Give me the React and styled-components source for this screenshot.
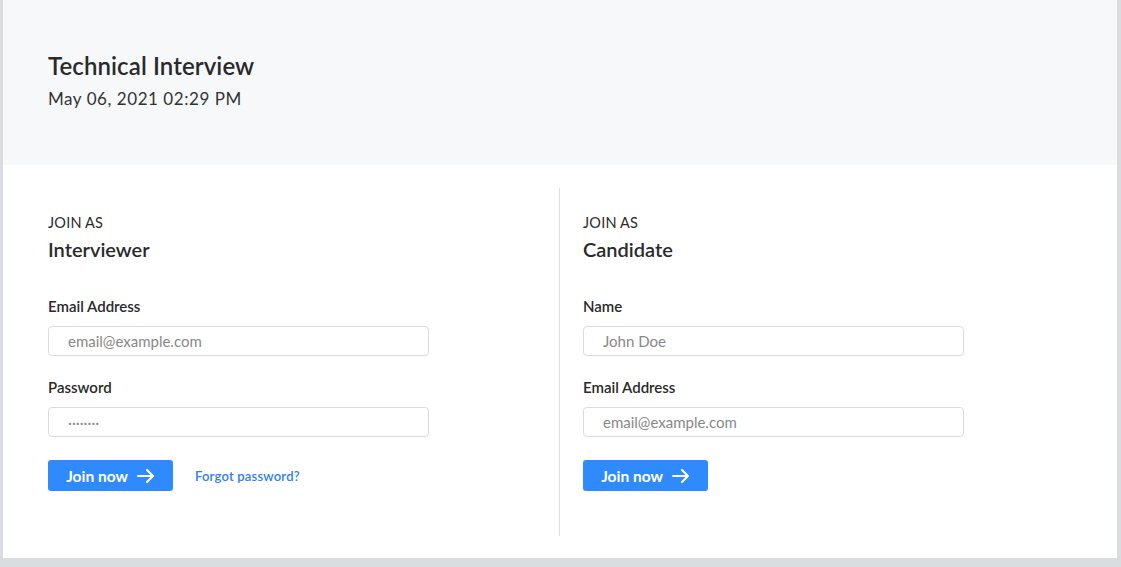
import React from 'react'
import styled, { createGlobalStyle } from 'styled-components'

const GlobalStyle = createGlobalStyle`
  html, body {
    margin: 0;
    padding: 0;
    background: #dadde0;
    font-family: Lato, 'Open Sans', sans-serif;
    color: #2b2b2b;
  }
  * { box-sizing: border-box; }
`

const Page = styled.div`
  padding: 0 4px 9px 3px;
`

const Card = styled.div`
  background: #fff;
  height: 558px;
  display: flex;
  flex-direction: column;
`

const Header = styled.header`
  background: #f7f8fa;
  height: 165px;
  padding: 51px 45px 0;
`

const Title = styled.h1`
  margin: 0;
  font-size: 24px;
  font-weight: 600;
  line-height: 30px;
  color: #2a2a2a;
  letter-spacing: 0.1px;
`

const DateText = styled.div`
  margin-top: 7px;
  font-size: 17px;
  line-height: 22px;
  color: #333;
  letter-spacing: 0.55px;
`

const Body = styled.div`
  display: flex;
  padding: 23px 0 22px 45px;
  flex: 1;
`

const Column = styled.section`
  width: ${p => (p.$first ? '512px' : 'auto')};
  padding: 25px 0 0 ${p => (p.$first ? '0' : '23px')};
  border-right: ${p => (p.$first ? '1px solid #dcdfe6' : 'none')};
`

const Overline = styled.div`
  font-size: 14.5px;
  line-height: 20px;
  color: #2b2b2b;
  text-transform: uppercase;
  letter-spacing: 0.2px;
`

const RoleName = styled.h2`
  margin: 3px 0 0;
  font-size: 20px;
  font-weight: 600;
  line-height: 26px;
  color: #2a2a2a;
`

const Form = styled.form`
  margin-top: 34px;
  display: flex;
  flex-direction: column;
`

const Label = styled.label`
  font-size: 15px;
  font-weight: 600;
  line-height: 20px;
  color: #2a2a2a;
  margin-bottom: 10px;
`

const Input = styled.input`
  width: 381px;
  height: 30px;
  border: 1px solid #d8dbe2;
  border-radius: 4px;
  padding: 0 19px;
  font-family: inherit;
  font-size: 15px;
  color: #333;
  margin-bottom: 21px;
  outline: none;
  &::placeholder {
    color: #888;
  }
`

const Actions = styled.div`
  display: flex;
  align-items: center;
  gap: 22px;
  margin-top: 2px;
`

const Button = styled.button`
  width: 125px;
  height: 31px;
  background: #2f8bfd;
  border: none;
  border-radius: 3px;
  color: #fff;
  font-family: inherit;
  font-size: 15.5px;
  font-weight: 700;
  display: flex;
  align-items: center;
  justify-content: center;
  gap: 9px;
  cursor: pointer;
`

const Link = styled.a`
  font-size: 13px;
  font-weight: 600;
  color: #2f7cf6;
  text-decoration: none;
  letter-spacing: 0.2px;
`

const Arrow = () => (
  <svg width="18" height="14" viewBox="0 0 18 14" fill="none" stroke="#fff" strokeWidth="2" strokeLinecap="round" strokeLinejoin="round">
    <path d="M1 7h15M10 1l6 6-6 6" />
  </svg>
)

const App = () => (
  <Page>
    <GlobalStyle />
    <Card>
      <Header>
        <Title>Technical Interview</Title>
        <DateText>May 06, 2021 02:29 PM</DateText>
      </Header>
      <Body>
        <Column $first>
          <Overline>Join as</Overline>
          <RoleName>Interviewer</RoleName>
          <Form onSubmit={e => e.preventDefault()}>
            <Label>Email Address</Label>
            <Input placeholder="email@example.com" />
            <Label>Password</Label>
            <Input type="password" placeholder="········" />
            <Actions>
              <Button type="submit">Join now <Arrow /></Button>
              <Link href="#">Forgot password?</Link>
            </Actions>
          </Form>
        </Column>
        <Column>
          <Overline>Join as</Overline>
          <RoleName>Candidate</RoleName>
          <Form onSubmit={e => e.preventDefault()}>
            <Label>Name</Label>
            <Input placeholder="John Doe" />
            <Label>Email Address</Label>
            <Input placeholder="email@example.com" />
            <Actions>
              <Button type="submit">Join now <Arrow /></Button>
            </Actions>
          </Form>
        </Column>
      </Body>
    </Card>
  </Page>
)

export default App
